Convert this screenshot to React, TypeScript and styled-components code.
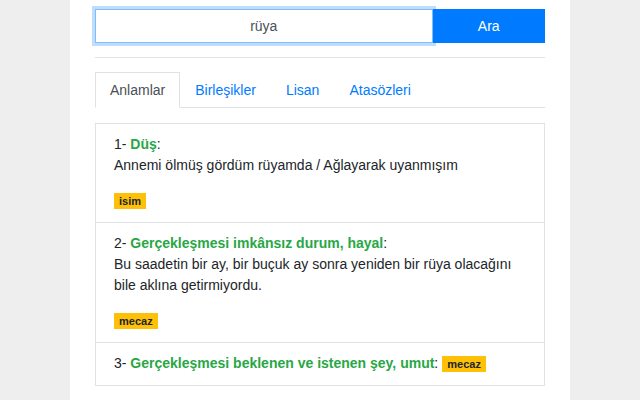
import React from "react";
import styled, { createGlobalStyle } from "styled-components";

const Global = createGlobalStyle`
  html, body { margin: 0; padding: 0; background: #eeeeee; }
  body { font-family: "Liberation Sans", Arial, sans-serif; font-size: 14px; color: #212529; }
  * { box-sizing: border-box; }
`;

const Page = styled.div`
  width: 500px;
  margin: 0 auto;
  background: #fff;
  min-height: 400px;
  padding: 9px 25px 20px;
`;

const SearchRow = styled.form`
  display: grid;
  grid-template-columns: 3fr 1fr;
  height: 34px;
`;

const InputWrap = styled.div`
  position: relative;
  z-index: 1;
  display: flex;
  align-items: center;
  justify-content: center;
  height: 34px;
  border: 1px solid #80bdff;
  box-shadow: 0 0 0 3px rgba(0, 123, 255, 0.25);
  background: #fff;
`;

const SearchInput = styled.input`
  width: 100%;
  height: 32px;
  border: none;
  outline: none;
  text-align: center;
  font-family: inherit;
  font-size: 14px;
  color: #495057;
  caret-color: #495057;
  padding: 0 12px;
  background: transparent;
`;

const SearchButton = styled.button`
  height: 34px;
  border: none;
  border-radius: 0;
  background: #007bff;
  color: #fff;
  font-family: inherit;
  font-size: 14px;
  padding: 0;
`;

const Divider = styled.hr`
  border: none;
  border-top: 1px solid #e3e3e3;
  margin: 14px 0 14px;
`;

const Tabs = styled.ul`
  display: flex;
  list-style: none;
  margin: 0;
  padding: 0;
  border-bottom: 1px solid #dee2e6;
`;

const Tab = styled.li<{ $active?: boolean }>`
  padding: 7px 14px;
  line-height: 20px;
  font-size: 14px;
  margin-bottom: -1px;
  border: 1px solid ${(p) => (p.$active ? "#dee2e6" : "transparent")};
  border-bottom-color: ${(p) => (p.$active ? "#fff" : "transparent")};
  background: ${(p) => (p.$active ? "#fff" : "transparent")};
  color: ${(p) => (p.$active ? "#495057" : "#007bff")};
`;

const List = styled.ul`
  list-style: none;
  margin: 15px 0 0;
  padding: 0;
  border: 1px solid #dee2e6;
`;

const Item = styled.li`
  padding: 10px 18px 11px;
  line-height: 21px;
  & + & { border-top: 1px solid #dee2e6; }
`;

const Term = styled.span`
  color: #28a745;
  font-weight: bold;
`;

const Tags = styled.div`
  margin-top: 14px;
  height: 21px;
  display: flex;
  align-items: center;
`;

const Badge = styled.span`
  display: inline-block;
  background: #ffc107;
  color: #212529;
  font-weight: bold;
  font-size: 11px;
  line-height: 16px;
  padding: 0 5px;
`;

const InlineBadge = styled(Badge)`
  margin-left: 4px;
`;

export default function App() {
  return (
    <>
      <Global />
      <Page>
        <SearchRow onSubmit={(e) => e.preventDefault()}>
          <InputWrap>
            <SearchInput defaultValue="rüya" autoFocus />
          </InputWrap>
          <SearchButton type="submit">Ara</SearchButton>
        </SearchRow>
        <Divider />
        <Tabs>
          <Tab $active>Anlamlar</Tab>
          <Tab>Birleşikler</Tab>
          <Tab>Lisan</Tab>
          <Tab>Atasözleri</Tab>
        </Tabs>
        <List>
          <Item>
            <div>
              1- <Term>Düş</Term>:
            </div>
            <div>Annemi ölmüş gördüm rüyamda / Ağlayarak uyanmışım</div>
            <Tags>
              <Badge>isim</Badge>
            </Tags>
          </Item>
          <Item>
            <div>
              2- <Term>Gerçekleşmesi imkânsız durum, hayal</Term>:
            </div>
            <div>
              Bu saadetin bir ay, bir buçuk ay sonra yeniden bir rüya olacağını bile aklına
              getirmiyordu.
            </div>
            <Tags>
              <Badge>mecaz</Badge>
            </Tags>
          </Item>
          <Item>
            <div>
              3- <Term>Gerçekleşmesi beklenen ve istenen şey, umut</Term>:
              <InlineBadge>mecaz</InlineBadge>
            </div>
          </Item>
        </List>
      </Page>
    </>
  );
}
